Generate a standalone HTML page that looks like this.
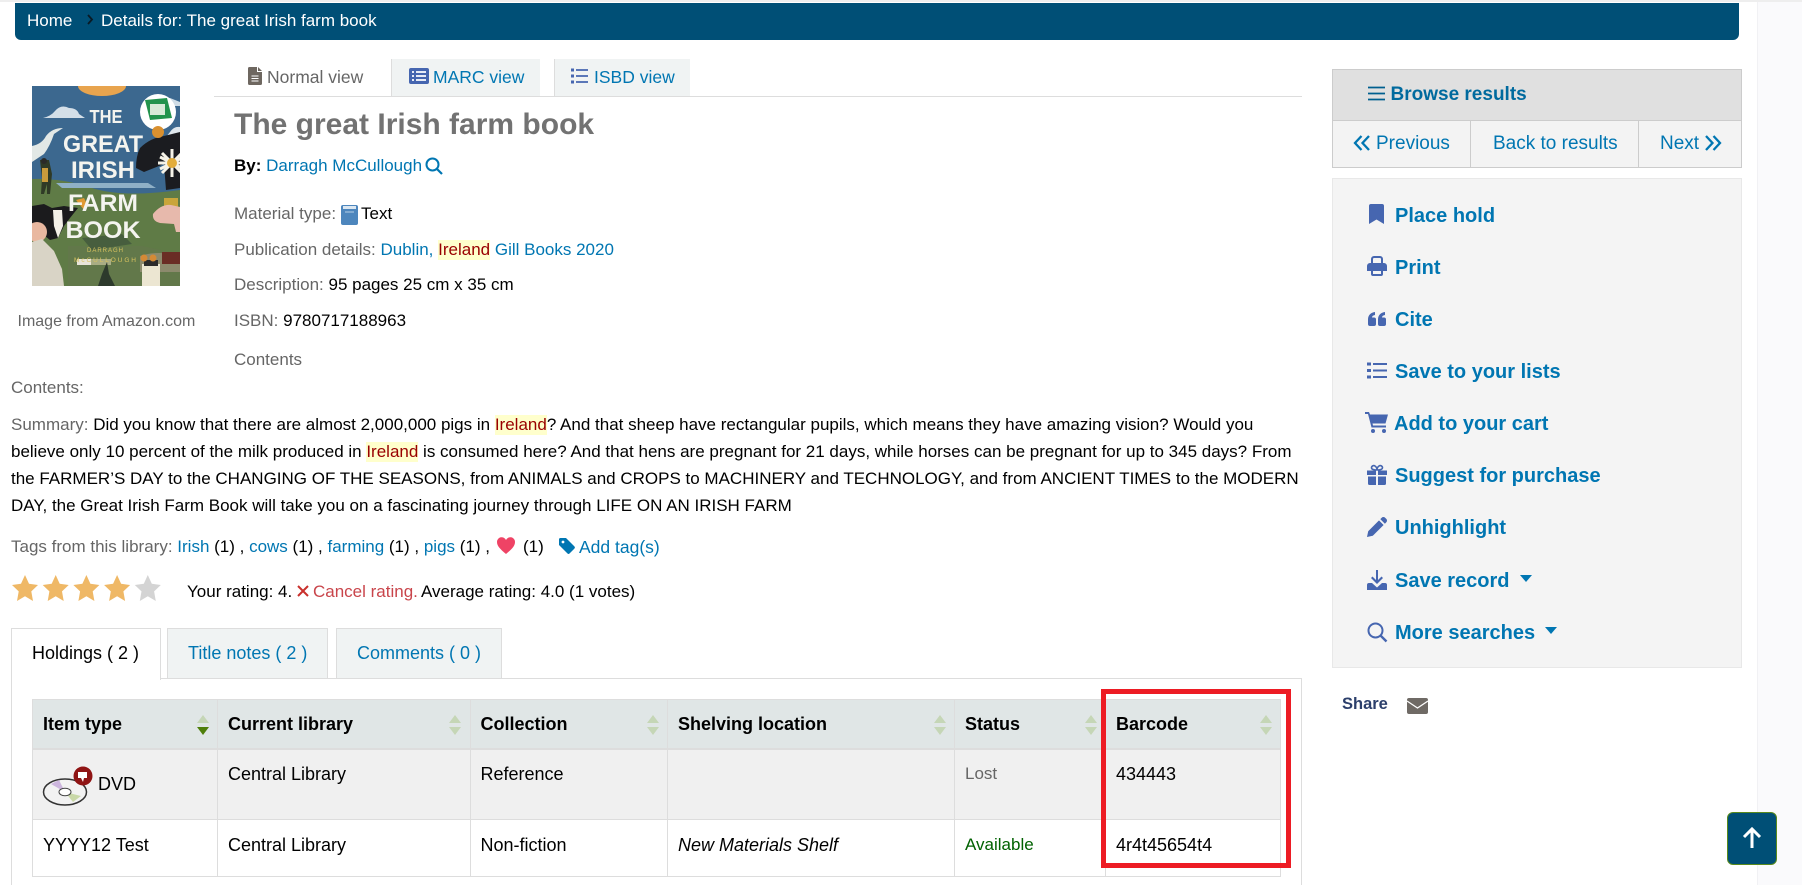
<!DOCTYPE html>
<html lang="en"><head><meta charset="utf-8"><title>The great Irish farm book</title>
<style>
html,body{margin:0;padding:0;background:#fff;width:1802px;height:885px;overflow:hidden}
body{position:relative;font-family:"Liberation Sans",sans-serif;font-size:17px;color:#000}
.t{position:absolute;white-space:nowrap;line-height:20px}
.a{position:absolute}
.l{color:#666}
.k{color:#0076b2}
.h{background:#ffc;color:#900;display:inline-block;line-height:20px}
.act{font-size:20px;font-weight:bold;color:#0076b2}
.n{font-size:19px}
.v{font-size:17.500px}
svg{position:absolute;overflow:visible}
.ic{fill:#4666b0}
table{position:absolute;left:32px;top:699px;border-collapse:collapse;table-layout:fixed;width:1248px}
th,td{border:1px solid #ddd;padding:0 0 0 10px;text-align:left;vertical-align:top;font-size:18px;line-height:20px;position:relative}
th{background:#e0e6e6;height:49px;vertical-align:middle;border-bottom:2px solid #ddd;padding-top:1px;box-sizing:border-box}
.r1 td{background:#f0f0f0;height:69px}
.r1 td div{padding-top:14px}
.r2 td div{padding-top:15px}
.r2 td{height:56px}
.s{position:absolute;right:7.500px;top:15px;width:13px;height:20px}
.s:before{content:"";position:absolute;left:0;top:0;border:6.500px solid transparent;border-top:0;border-bottom:8px solid #c5d6b6}
.s:after{content:"";position:absolute;left:0;top:12px;border:6.500px solid transparent;border-bottom:0;border-top:8px solid #c5d6b6}
.s.d:after{border-top-color:#4f7f0b}
</style></head><body>

<div class="a" style="left:1757px;top:0;width:45px;height:885px;background:#fafafc;border-left:1px solid #f1f1f4;box-sizing:border-box"></div>
<div class="a" style="left:0;top:0;width:1802px;height:2px;background:#eee"></div>

<!-- breadcrumb -->
<div class="a" style="left:15px;top:3px;width:1724px;height:37px;background:#004f76;border-radius:0 0 6px 6px"></div>
<div class="t" style="left:27px;top:11px;color:#fff">Home</div>
<svg style="left:86px;top:14px" width="8" height="12" viewBox="0 0 8 12"><path d="M2 1l4 4.500-4 4.500" fill="none" stroke="#0a1a24" stroke-width="1.800"/></svg>
<div class="t" style="left:101px;top:11px;color:#fff">Details for: The great Irish farm book</div>

<!-- cover -->
<svg style="left:32px;top:86px" width="148" height="200" viewBox="0 0 148 200">
<defs><clipPath id="c"><rect width="148" height="200"/></clipPath></defs>
<g clip-path="url(#c)">
<rect width="148" height="200" fill="#3c688f"/>
<path d="M0 93Q30 92 60 102T148 104V200H0z" fill="#5f7b46"/>
<path d="M24 97h92l8 5H30z" fill="#8fb0c6"/>
<ellipse cx="70" cy="0" rx="24" ry="10" fill="#e8a44e"/>
<path d="M11 32q8-2 12-7 6-7 14-3 8 0 10 6l6 4z" fill="#d4dfe8"/>
<path d="M126 16q6-5 12-4l10 4v4h-22z" fill="#cfdce6"/>
<path d="M138 46q4-6 10-5v10h-14z" fill="#dfe7ed"/>
<path d="M0 60q10-2 14-10 6-8 17-8l-9 6q-4 12-10 20l-12 8z" fill="#e2e8e6"/>
<path d="M8 74h9l3 14-2 20h-3v-10l-3 10h-3l1-16z" fill="#2f3a26"/><rect x="10" y="82" width="6" height="14" fill="#c99b3c"/><circle cx="12" cy="75" r="3" fill="#2a2a28"/>
<path d="M108 62q10-10 24-12l16-4v56l-14 2-2-26-20 8-8-4q0-12 4-20z" fill="#1b1c20"/>
<g stroke="#f6f3e8" stroke-width="3"><path d="M126 77h28M140 63v28M130 67l20 20M150 67l-20 20M128 71l24 12M152 71l-24 12"/></g><circle cx="140" cy="77" r="5" fill="#e3ad3a"/>
<path d="M132 112h14v14h-14z" fill="#c9a53a"/>
<circle cx="126" cy="26" r="18" fill="#fff"/><path d="M113 14l22-2 5 20-22 2z" fill="#23934d"/><rect x="118" y="18" width="15" height="11" fill="#d8ead8"/>
<circle cx="126" cy="46" r="6" fill="#d9902f"/>
<path d="M121 128q8-10 18-9l9 2v25h-4l-2-8-14-1q-8-2-7-9z" fill="#e7b9ac"/>
<path d="M52 124l-8-10 8-2 4 8z" fill="#e09a33"/>
<path d="M0 120l12-2 8 4 12-2 14 2-8 10-6 8-6 12-8 2-10-8-8-2z" fill="#1b1b1d"/>
<path d="M21 124l9 0 1 16-5 12-4-12z" fill="#f4f1e8"/>
<circle cx="5" cy="146" r="10" fill="#e9b8a0"/>
<path d="M0 156l10-3 12 12 8 18 2 17H0z" fill="#d9d4c6"/>
<path d="M36 160h74l38 8v32H36z" fill="#62784a"/><path d="M50 152l40-4 10 10-40 6z" fill="#475e3e"/><rect x="45" y="173" width="34" height="6" fill="#a9ad84"/><rect x="45" y="173" width="14" height="6" fill="#e8e4d8"/>
<path d="M108 170q18-6 40 0v16h-40z" fill="#8c8a6d"/>
<path d="M110 178h18v22h-18z" fill="#ece6d2"/><path d="M112 174h14v6h-14z" fill="#2c2b2c"/>
<path d="M130 166h18v12h-18z" fill="#6a2d25"/><circle cx="112" cy="172" r="3.500" fill="#d48a36"/><circle cx="121" cy="172" r="3.500" fill="#d48a36"/>
<path d="M70 188l5-12 2 12 6 12H66z" fill="#2d3a2c"/>
<g fill="#f4f4ef" font-family="Liberation Sans" font-weight="bold" text-anchor="middle">
<text x="74" y="37" font-size="18" textLength="33" lengthAdjust="spacingAndGlyphs">THE</text>
<text x="71" y="66" font-size="24" textLength="80" lengthAdjust="spacingAndGlyphs">GREAT</text>
<text x="71" y="92" font-size="24" textLength="64" lengthAdjust="spacingAndGlyphs">IRISH</text>
<text x="71" y="125" font-size="24" textLength="70" lengthAdjust="spacingAndGlyphs">FARM</text>
<text x="71" y="152" font-size="24" textLength="75" lengthAdjust="spacingAndGlyphs">BOOK</text>
</g>
<text x="73" y="166" text-anchor="middle" font-size="6" fill="#d9c35f" font-family="Liberation Sans" textLength="36" lengthAdjust="spacing">DARRAGH</text>
<text x="73" y="176" text-anchor="middle" font-size="6.500" fill="#d9c35f" font-family="Liberation Sans" textLength="62" lengthAdjust="spacing">McCULLOUGH</text>
</g></svg>
<div class="t l" style="left:17.500px;top:312px;font-size:16px">Image from Amazon.com</div>

<!-- view tabs -->
<div class="a" style="left:214px;top:96px;width:1088px;height:1px;background:#ddd"></div>
<div class="a" style="left:391px;top:59px;width:149px;height:37px;background:#f0f3f3;border-left:1px solid #ddd;box-sizing:border-box"></div>
<div class="a" style="left:554px;top:59px;width:136px;height:37px;background:#f0f3f3;border-left:1px solid #ddd;box-sizing:border-box"></div>
<svg style="left:248px;top:67px" width="14" height="18" viewBox="0 0 14 18"><path d="M1.500 0H9v5h5v11.500a1.500 1.500 0 0 1-1.500 1.500h-11A1.500 1.500 0 0 1 0 16.500v-15A1.500 1.500 0 0 1 1.500 0zM10 0l4 4h-4z" fill="#6e6760"/><path d="M3.500 9h7M3.500 11.500h7M3.500 14h7" stroke="#fff" stroke-width="1.100"/></svg>
<div class="t l v" style="left:267px;top:67px">Normal view</div>
<svg style="left:409px;top:68px" width="20" height="16" viewBox="0 0 20 16"><rect width="20" height="16" rx="2" fill="#4666b0"/><path d="M3 4h2M3 8h2M3 12h2M7 4h10M7 8h10M7 12h10" stroke="#fff" stroke-width="1.800"/></svg>
<div class="t k v" style="left:433px;top:67px">MARC view</div>
<svg style="left:571px;top:68px" width="17" height="16" viewBox="0 0 17 16"><path d="M0 2h3M0 8h3M0 14h3" stroke="#4666b0" stroke-width="3"/><path d="M5 2h12M5 8h12M5 14h12" stroke="#4666b0" stroke-width="1.800"/></svg>
<div class="t k v" style="left:594px;top:67px">ISBD view</div>

<!-- bib -->
<div class="t" style="left:234px;top:107px;font-size:30px;line-height:36px;font-weight:bold;color:#727272">The great Irish farm book</div>
<div class="t" style="left:234px;top:156px"><b>By:</b> <span class="k">Darragh McCullough</span></div>
<svg style="left:425px;top:157px" width="18" height="18" viewBox="0 0 18 18"><circle cx="7.500" cy="7.500" r="6" fill="none" stroke="#0076b2" stroke-width="2"/><path d="M12 12l5 5" stroke="#0076b2" stroke-width="2.200"/></svg>
<div class="t l" style="left:234px;top:204px">Material type:</div>
<svg style="left:341px;top:205px" width="17" height="20" viewBox="0 0 17 20"><rect width="17" height="20" rx="2" fill="#4d86bd"/><rect x="2" y="1" width="13" height="3" fill="#dbe7f1"/><path d="M4 7h9" stroke="#b8d0e6"/></svg>
<div class="t" style="left:361px;top:204px">Text</div>
<div class="t l" style="left:234px;top:240px">Publication details: <span class="k">Dublin,</span> <span class="h">Ireland</span> <span class="k">Gill Books 2020</span></div>
<div class="t l" style="left:234px;top:275px">Description: <span style="color:#000">95 pages 25 cm x 35 cm</span></div>
<div class="t l" style="left:234px;top:311px">ISBN: <span style="color:#000">9780717188963</span></div>
<div class="t l" style="left:234px;top:350px">Contents</div>
<div class="t l" style="left:11px;top:378px">Contents:</div>
<div class="t" style="left:11px;top:415px"><span class="l">Summary:</span> Did you know that there are almost 2,000,000 pigs in <span class="h">Ireland</span>? And that sheep have rectangular pupils, which means they have amazing vision? Would you</div>
<div class="t" style="left:11px;top:442px">believe only 10 percent of the milk produced in <span class="h">Ireland</span> is consumed here? And that hens are pregnant for 21 days, while horses can be pregnant for up to 345 days? From</div>
<div class="t" style="left:11px;top:469px">the FARMER’S DAY to the CHANGING OF THE SEASONS, from ANIMALS and CROPS to MACHINERY and TECHNOLOGY, and from ANCIENT TIMES to the MODERN</div>
<div class="t" style="left:11px;top:496px">DAY, the Great Irish Farm Book will take you on a fascinating journey through LIFE ON AN IRISH FARM</div>

<!-- tags -->
<div class="t" style="left:11px;top:537px"><span class="l">Tags from this library:</span> <span class="k">Irish</span> (1) , <span class="k">cows</span> (1) , <span class="k">farming</span> (1) , <span class="k">pigs</span> (1) ,</div>
<svg style="left:497px;top:537px" width="18" height="17" viewBox="0 0 18 17"><path d="M9 17C3 12 0 9 0 5a4.700 4.700 0 0 1 9-2 4.700 4.700 0 0 1 9 2c0 4-3 7-9 12z" fill="#ef4365"/></svg>
<div class="t" style="left:523px;top:537px">(1)</div>
<svg style="left:559px;top:538px" width="16" height="16" viewBox="0 0 16 16"><path d="M0 1.500A1.500 1.500 0 0 1 1.500 0H7l8.500 8.500a1.500 1.500 0 0 1 0 2l-5 5a1.500 1.500 0 0 1-2 0L0 7z" fill="#0076b2"/><circle cx="4" cy="4" r="1.400" fill="#fff"/></svg>
<div class="t k v" style="left:579px;top:537px">Add tag(s)</div>

<!-- rating -->
<svg style="left:12px;top:575px" width="150" height="26" viewBox="0 0 150 26">
<defs><path id="st" d="M13 0l4 8.800 9 1.200-6.700 6.400L21 26l-8-4.800L5 26l1.700-9.600L0 10l9-1.200z"/></defs>
<use href="#st" fill="#efb866"/><use href="#st" x="30.700" fill="#efb866"/><use href="#st" x="61.400" fill="#efb866"/><use href="#st" x="92.100" fill="#efb866"/><use href="#st" x="122.800" fill="#d4d4d4"/></svg>
<div class="t" style="left:187px;top:582px">Your rating: 4.</div>
<svg style="left:297px;top:585px" width="12" height="12" viewBox="0 0 12 12"><path d="M1 1l10 10M11 1L1 11" stroke="#c9302c" stroke-width="2"/></svg>
<div class="t" style="left:313px;top:582px;color:#c9454b">Cancel rating.</div>
<div class="t" style="left:421px;top:582px">Average rating: 4.0 (1 votes)</div>

<!-- holdings tabs -->
<div class="a" style="left:11px;top:678px;width:1291px;height:207px;border:1px solid #ddd;border-bottom:0;box-sizing:border-box"></div>
<div class="a" style="left:11px;top:628px;width:150px;height:52px;background:#fff;border:1px solid #ddd;border-bottom:0;box-sizing:border-box"></div>
<div class="a" style="left:167px;top:628px;width:161px;height:51px;background:#f0f3f3;border:1px solid #ddd;box-sizing:border-box"></div>
<div class="a" style="left:336px;top:628px;width:166px;height:51px;background:#f0f3f3;border:1px solid #ddd;box-sizing:border-box"></div>
<div class="t" style="left:32px;top:643px;font-size:18px">Holdings ( 2 )</div>
<div class="t k" style="left:188px;top:643px;font-size:18px">Title notes ( 2 )</div>
<div class="t k" style="left:357px;top:643px;font-size:18px">Comments ( 0 )</div>

<table>
<colgroup><col style="width:185px"><col style="width:252.500px"><col style="width:197.500px"><col style="width:287px"><col style="width:151px"><col style="width:175px"></colgroup>
<tr><th>Item type<i class="s d"></i></th><th>Current library<i class="s"></i></th><th>Collection<i class="s"></i></th><th>Shelving location<i class="s"></i></th><th>Status<i class="s"></i></th><th>Barcode<i class="s"></i></th></tr>
<tr class="r1"><td></td><td><div>Central Library</div></td><td><div>Reference</div></td><td></td><td><div style="color:#666;font-size:17px">Lost</div></td><td><div>434443</div></td></tr>
<tr class="r2"><td><div>YYYY12 Test</div></td><td><div>Central Library</div></td><td><div>Non-fiction</div></td><td><div><i>New Materials Shelf</i></div></td><td><div style="color:#006100;font-size:17px">Available</div></td><td><div>4r4t45654t4</div></td></tr>
</table>
<svg style="left:43px;top:766px" width="50" height="40" viewBox="0 0 50 40">
<ellipse cx="22" cy="26" rx="21.500" ry="13" fill="#f2f2f2" stroke="#333" stroke-width="1.500"/>
<path d="M22 26L8 18 16 14z" fill="#cdb6de"/><path d="M22 26l16 4-8 6z" fill="#c9d8a8"/>
<ellipse cx="22" cy="26" rx="6" ry="3.800" fill="#fff" stroke="#444"/>
<circle cx="40" cy="10" r="9.500" fill="#8f1414"/><path d="M35 6h9v6h-3l-1 4-2-4h-3z" fill="#fff"/></svg>
<div class="t" style="left:98px;top:774px;font-size:18px">DVD</div>

<!-- red box -->
<div class="a" style="left:1101px;top:689px;width:190px;height:179px;border:5px solid #ed1c24;box-sizing:border-box"></div>

<!-- right: browse -->
<div class="a" style="left:1332px;top:69px;width:410px;height:99px;background:#f3f3f3;border:1px solid #ccc;box-sizing:border-box"></div>
<div class="a" style="left:1332px;top:69px;width:410px;height:52px;background:#e0e0e0;border:1px solid #ccc;box-sizing:border-box"></div>
<div class="a" style="left:1470px;top:121px;width:1px;height:47px;background:#ccc"></div>
<div class="a" style="left:1638px;top:121px;width:1px;height:47px;background:#ccc"></div>
<svg style="left:1368px;top:86px" width="17" height="15" viewBox="0 0 17 15"><path d="M0 1.500h17M0 7.500h17M0 13.500h17" stroke="#005f8f" stroke-width="1.800"/></svg>
<div class="t" style="left:1390.500px;top:85px;font-size:19px;font-weight:bold;color:#006a9e">Browse results</div>
<svg style="left:1354px;top:135px" width="16" height="16" viewBox="0 0 16 16"><path d="M7.500 1L1 8l6.500 7M15 1L8.500 8l6.500 7" fill="none" stroke="#0076b2" stroke-width="2.300"/></svg>
<div class="t k n" style="left:1376px;top:134px">Previous</div>
<div class="t k n" style="left:1493px;top:134px">Back to results</div>
<div class="t k n" style="left:1660px;top:134px">Next</div>
<svg style="left:1705px;top:135px" width="16" height="16" viewBox="0 0 16 16"><path d="M1 1l6.500 7L1 15M8.500 1L15 8l-6.500 7" fill="none" stroke="#0076b2" stroke-width="2.300"/></svg>

<!-- right: actions -->
<div class="a" style="left:1332px;top:178px;width:410px;height:490px;background:#f4f4f4;border:1px solid #e8e8e8;box-sizing:border-box"></div>
<div class="t act" style="left:1395px;top:206px">Place hold</div>
<div class="t act" style="left:1395px;top:258px">Print</div>
<div class="t act" style="left:1395px;top:310px">Cite</div>
<div class="t act" style="left:1395px;top:362px">Save to your lists</div>
<div class="t act" style="left:1394px;top:414px">Add to your cart</div>
<div class="t act" style="left:1395px;top:466px">Suggest for purchase</div>
<div class="t act" style="left:1395px;top:518px">Unhighlight</div>
<div class="t act" style="left:1395px;top:571px">Save record</div>
<div class="t act" style="left:1395px;top:623px">More searches</div>

<svg class="ic" style="left:1369px;top:204px" width="15" height="20" viewBox="0 0 15 20"><path d="M0 20V2a2 2 0 0 1 2-2h11a2 2 0 0 1 2 2v18l-7.500-4.500z"/></svg>
<svg class="ic" style="left:1367px;top:256px" width="20" height="20" viewBox="0 0 20 20"><path d="M4 8V3a3 3 0 0 1 3-3h6a3 3 0 0 1 3 3v5h-2V3a1 1 0 0 0-1-1H7a1 1 0 0 0-1 1v5z"/><path d="M3 7h14a3 3 0 0 1 3 3v5h-4v-2H4v2H0v-5a3 3 0 0 1 3-3z"/><path d="M4 13h12v5a2 2 0 0 1-2 2H6a2 2 0 0 1-2-2zM6 15v3h8v-3z"/></svg>
<svg class="ic" style="left:1368px;top:312px" width="18" height="14" viewBox="0 0 18 14"><path d="M0 7.500C0 3 3 .5 7 0v3C5 3.300 4 4.300 4 5.500h2A2 2 0 0 1 8 7.500V12a2 2 0 0 1-2 2H2a2 2 0 0 1-2-2zM10 7.500C10 3 13 .5 17 0v3c-2 .3-3 1.300-3 2.500h2a2 2 0 0 1 2 2V12a2 2 0 0 1-2 2h-4a2 2 0 0 1-2-2z"/></svg>
<svg style="left:1367px;top:362px" width="20" height="17" viewBox="0 0 20 17"><path d="M0 2h4M0 8.500h4M0 15h4" stroke="#4666b0" stroke-width="3"/><path d="M6 2h14M6 8.500h14M6 15h14" stroke="#4666b0" stroke-width="2"/></svg>
<svg class="ic" style="left:1365px;top:412px" width="23" height="21" viewBox="0 0 23 21"><path d="M0 0h4l1 2.500h18l-2.500 9H7.500l.5 2h13v2H6.500L3 2H0z"/><circle cx="8" cy="19" r="2"/><circle cx="19" cy="19" r="2"/></svg>
<svg class="ic" style="left:1367px;top:465px" width="20" height="20" viewBox="0 0 20 20"><path d="M0 5.500h9V10H0zM11 5.500h9V10h-9zM1 11.500h8V20H2.500A1.500 1.500 0 0 1 1 18.500zM11 11.500h8v7a1.500 1.500 0 0 1-1.500 1.500H11z"/><path d="M10 5C7 5 4.500 4.500 4.500 2.800 4.500 1 6.500 0 8 1c1.200.8 2 2.500 2 4zM10 5c3 0 5.500-.5 5.500-2.200C15.500 1 13.500 0 12 1c-1.200.8-2 2.500-2 4z" fill="none" stroke="#4666b0" stroke-width="1.600"/></svg>
<svg class="ic" style="left:1367px;top:517px" width="20" height="20" viewBox="0 0 20 20"><path d="M0 20l1.200-5.800L12 3.400l4.600 4.600L5.800 18.800zM13.300 2.100l1.400-1.400a2.400 2.400 0 0 1 3.400 0l1.200 1.200a2.400 2.400 0 0 1 0 3.400l-1.400 1.400z"/></svg>
<svg class="ic" style="left:1367px;top:570px" width="20" height="20" viewBox="0 0 20 20"><path d="M9 0h2v10l3.500-3.500 1.500 1.500-6 6-6-6 1.500-1.500L9 10z"/><path d="M2 13h3l5 4.500 5-4.500h3a2 2 0 0 1 2 2v5H0v-5a2 2 0 0 1 2-2z"/></svg>
<svg style="left:1367px;top:622px" width="20" height="20" viewBox="0 0 20 20"><circle cx="8.500" cy="8.500" r="7" fill="none" stroke="#4666b0" stroke-width="2"/><path d="M13.500 13.500L19.500 19.500" stroke="#4666b0" stroke-width="2.400"/></svg>
<svg style="left:1520px;top:575px" width="12" height="7" viewBox="0 0 12 7"><path d="M0 0h12L6 7z" fill="#0076b2"/></svg>
<svg style="left:1545px;top:627px" width="12" height="7" viewBox="0 0 12 7"><path d="M0 0h12L6 7z" fill="#0076b2"/></svg>

<div class="t" style="left:1342px;top:694px;font-size:16.500px;font-weight:bold;color:#2c3f6b">Share</div>
<svg style="left:1407px;top:698px" width="21" height="16" viewBox="0 0 21 16"><rect width="21" height="16" rx="2" fill="#6f6a65"/><path d="M0 3l10.500 7L21 3" fill="none" stroke="#fff" stroke-width="1.300"/></svg>

<!-- back to top -->
<div class="a" style="left:1727px;top:812px;width:50px;height:53px;background:#004f76;border:1px solid #5a8a1c;border-radius:6px;box-sizing:border-box"></div>
<svg style="left:1742px;top:827px" width="20" height="22" viewBox="0 0 20 22"><path d="M10 21V2M2 10l8-8 8 8" fill="none" stroke="#fff" stroke-width="3"/></svg>
</body></html>
